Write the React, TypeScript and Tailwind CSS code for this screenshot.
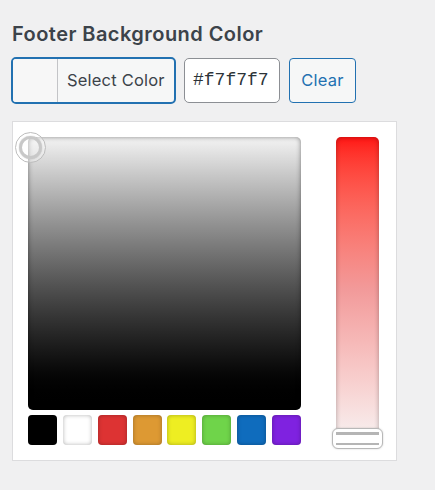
import React from 'react';

const swatches = ['#000000', '#ffffff', '#dd3333', '#dd9933', '#eeee22', '#6fd44a', '#0f6cbd', '#7f22e0'];

export default function App() {
  return (
    <div className="min-h-[490px] w-[435px] bg-[#f0f0f1] pl-[11px] pt-[20px]" style={{ fontFamily: 'Inter, "Liberation Sans", Arial, sans-serif' }}>
      <h2 className="ml-[1px] text-[20px] font-semibold leading-[28px] tracking-[0.45px] text-[#3c434a]">Footer Background Color</h2>

      {/* color control row */}
      <div className="mt-[9px] flex h-[47px] items-center">
        <button className="flex h-[47px] w-[165px] items-stretch overflow-hidden rounded-[5px] border-2 border-[#2271b1] bg-[#f6f7f7]">
          <span className="w-[45px] border-r border-[#c3c4c7] bg-[#f7f7f7]" />
          <span className="flex flex-1 items-center pl-[9px] text-[16.5px] tracking-[0.2px] text-[#3c434a]">Select Color</span>
        </button>
        <div className="ml-[8px] flex h-[45px] w-[96px] items-center rounded-[5px] border border-[#8c8f94] bg-white pl-[8px] text-[18px] text-[#2c3338]" style={{ fontFamily: '"Liberation Mono", "DejaVu Sans Mono", monospace' }}>
          #f7f7f7
        </div>
        <button className="ml-[9px] flex h-[45px] w-[67px] items-center justify-center rounded-[4px] border border-[#2271b1] bg-[#f6f7f7] text-[16.5px] tracking-[0.2px] text-[#2271b1]">
          Clear
        </button>
      </div>

      {/* picker */}
      <div className="ml-[1px] mt-[17px] flex h-[340px] w-[385px] border border-[#dcdcde] bg-white pl-[15px] pt-[15px]">
        <div className="flex w-[273px] flex-col">
          <div className="relative h-[273px] w-[273px]">
            <div className="h-full w-full rounded-[5px] bg-gradient-to-b from-[#f4f4f4] to-[#000000] shadow-[inset_0_0_5px_rgba(0,0,0,0.45)]" />
            <span className="absolute left-[-13px] top-[-5px] h-[31px] w-[31px] rounded-full border border-[#bdbdbd] bg-white/30">
              <span className="absolute inset-[3px] rounded-full border-[3px] border-[#c8c8c8] shadow-[0_0_1px_rgba(0,0,0,0.3)]" />
            </span>
          </div>
          <div className="mt-[5px] flex justify-between">
            {swatches.map((c) => (
              <span
                key={c}
                className="h-[30px] w-[29px] rounded-[4px] shadow-[inset_0_0_4px_rgba(0,0,0,0.3)]"
                style={{ backgroundColor: c }}
              />
            ))}
          </div>
        </div>

        <div className="relative ml-[35px] h-[310px] w-[43px]">
          <div className="h-[305px] w-[43px] rounded-[5px] bg-gradient-to-b from-[#ff1212] via-[#f29a9a] to-[#f7f2f2] shadow-[inset_0_0_5px_rgba(0,0,0,0.3)]" />
          <span className="absolute left-[-4px] top-[291px] flex h-[21px] w-[51px] flex-col justify-between rounded-[6px] border border-[#b8b8b8] bg-white px-[3px] py-[3px] shadow-[0_0_2px_rgba(0,0,0,0.2)]">
            <span className="h-[3px] w-full bg-[#b5b5b5]" />
            <span className="h-[2px] w-full bg-[#b5b5b5]" />
          </span>
        </div>
      </div>
    </div>
  );
}
